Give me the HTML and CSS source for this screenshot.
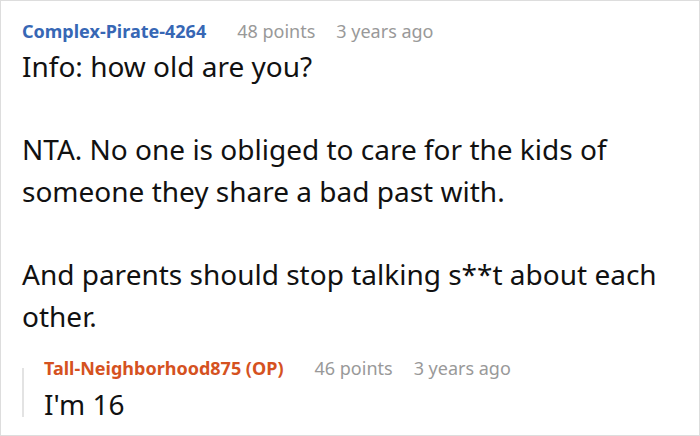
FILE: index.html
```html
<!DOCTYPE html>
<html>
<head>
  <title>Comment</title>
  <link rel="stylesheet" href="styles.css">
</head>
<body>
  <div class="comment">
    <div class="meta">
      <span class="author">Complex-Pirate-4264</span>
      <span class="info">48 points</span>
      <span class="info">3 years ago</span>
    </div>
    <div class="text">
      <p>Info: how old are you?</p>
      <p>NTA. No one is obliged to care for the kids of someone they share a bad past with.</p>
      <p>And parents should stop talking s**t about each other.</p>
    </div>

    <div class="reply">
      <div class="meta">
        <span class="author op">Tall-Neighborhood875 (OP)</span>
        <span class="info">46 points</span>
        <span class="info">3 years ago</span>
      </div>
      <div class="text">
        <p>I'm 16</p>
      </div>
    </div>
  </div>
</body>
</html>
```

FILE: styles.css
```css
html, body {
  margin: 0;
  padding: 0;
  background: #fff;
}
body {
  font-family: "Noto Sans", sans-serif;
  width: 700px;
  height: 436px;
  overflow: hidden;
}
.comment {
  box-sizing: border-box;
  width: 700px;
  height: 436px;
  border: 1px solid #ddd;
  padding: 16px 20px 0 21px;
}
.meta {
  display: flex;
  gap: 21px;
  align-items: baseline;
  font-size: 18px;
  line-height: 28px;
}
.author {
  color: #3767b5;
  font-weight: bold;
  margin-right: 10px;
}
.author.op {
  color: #d5521f;
}
.info {
  color: #999;
}
.text {
  font-size: 28px;
  line-height: 42px;
  color: #111;
}
.text p {
  margin: 0 0 41px;
}
.text p:last-child {
  margin-bottom: 0;
}
.reply {
  position: relative;
  margin-top: 17px;
  padding-left: 22px;
}
.reply::before {
  content: "";
  position: absolute;
  left: 0;
  top: 14px;
  width: 2px;
  height: 49px;
  background: #e3e3e3;
}
.reply .text {
  margin-top: 1px;
}
```
